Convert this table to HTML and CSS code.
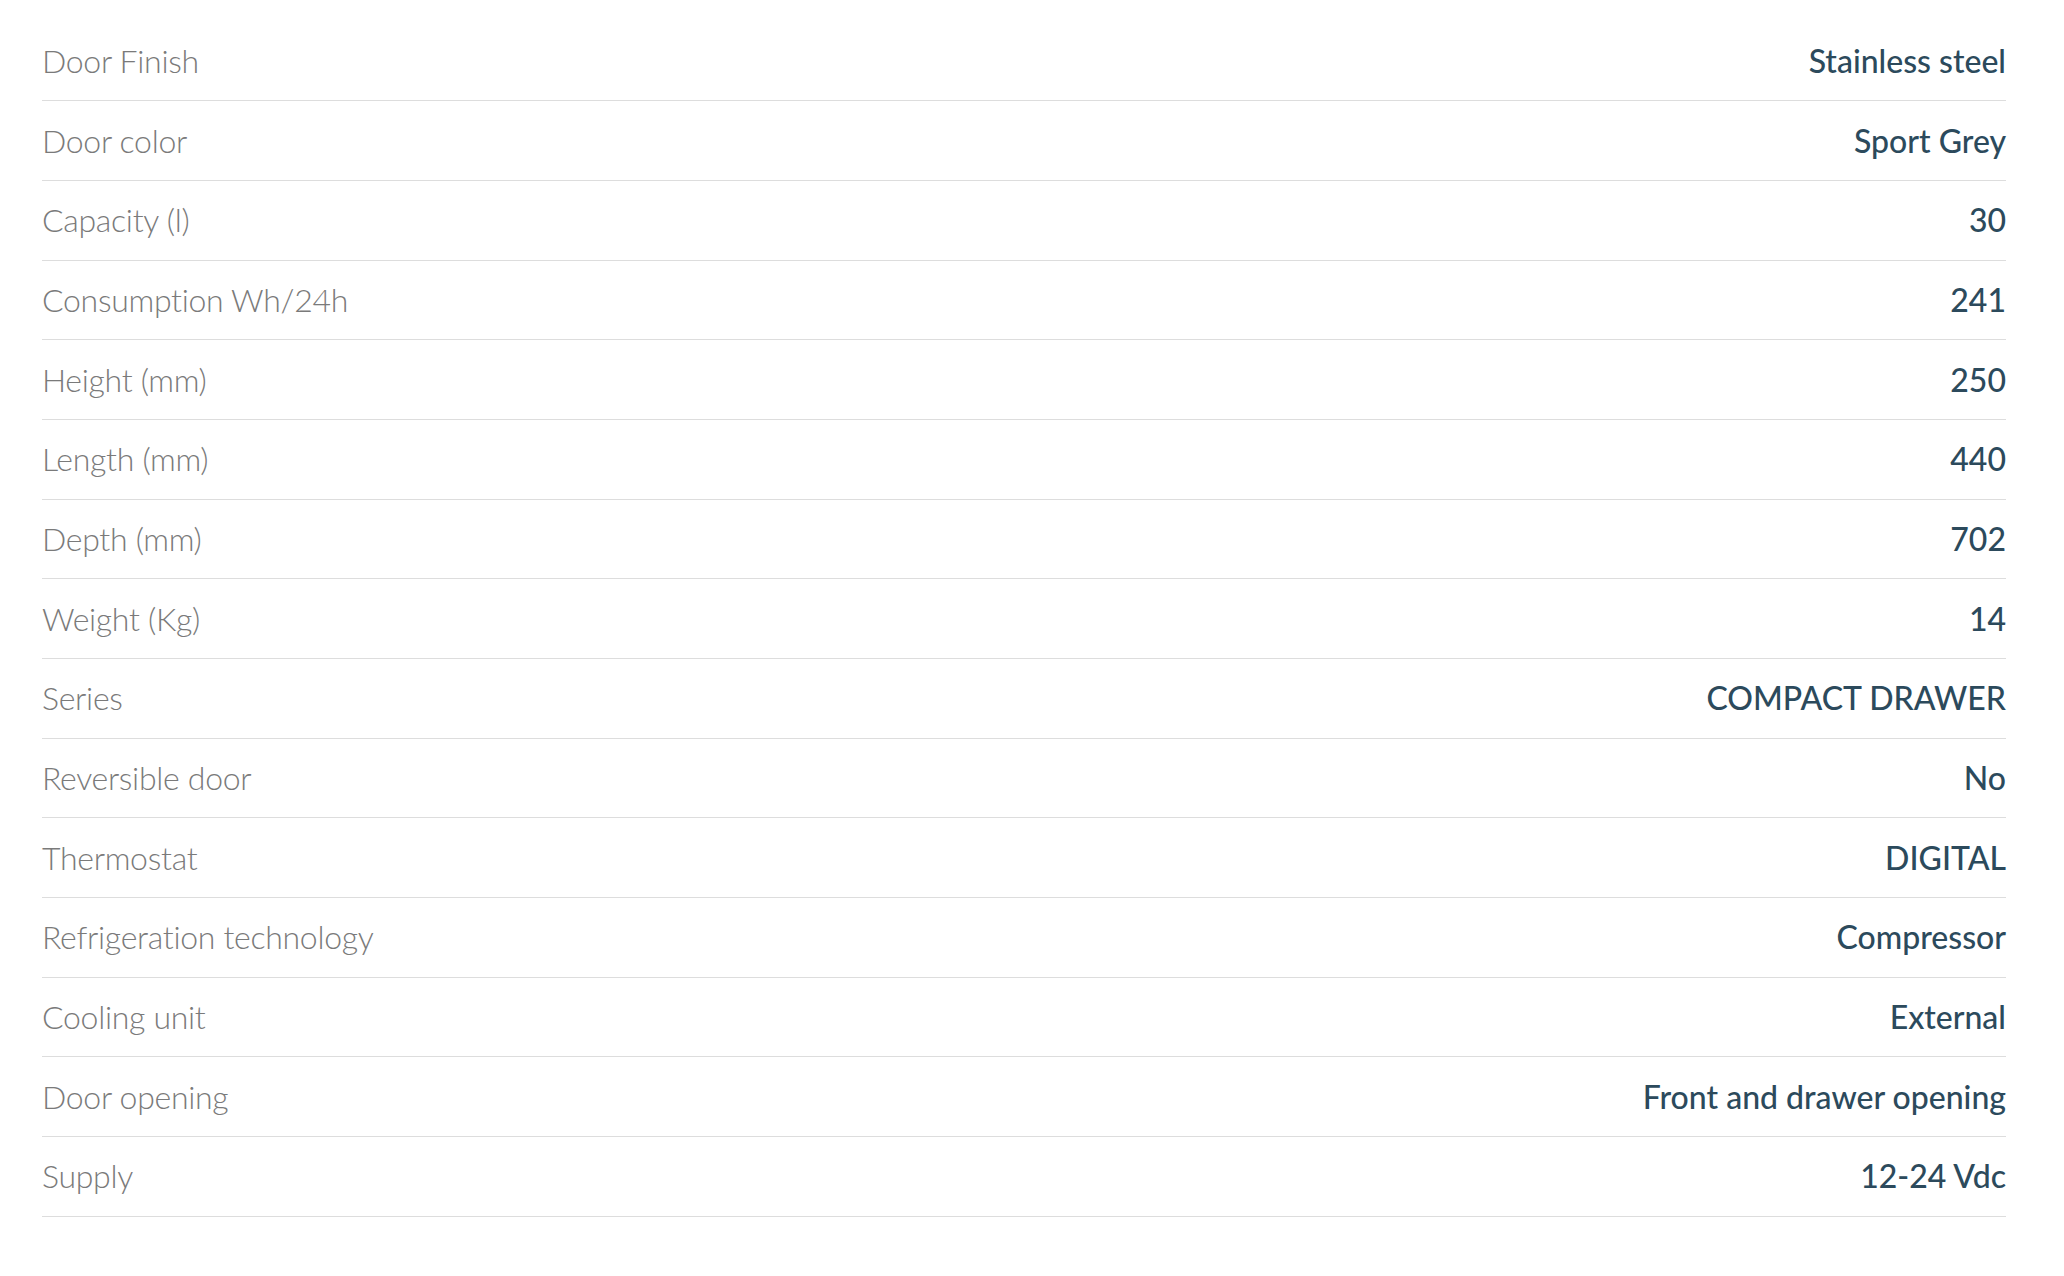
FILE: index.html
```html
<!DOCTYPE html>
<html lang="en">
<head>
<meta charset="utf-8">
<title>Specifications</title>
<link rel="stylesheet" href="styles.css">
</head>
<body>
<div class="specs">
  <div class="row"><span class="label">Door Finish</span><span class="value">Stainless steel</span></div>
  <div class="row"><span class="label">Door color</span><span class="value">Sport Grey</span></div>
  <div class="row"><span class="label">Capacity (l)</span><span class="value">30</span></div>
  <div class="row"><span class="label">Consumption Wh/24h</span><span class="value">241</span></div>
  <div class="row"><span class="label">Height (mm)</span><span class="value">250</span></div>
  <div class="row"><span class="label">Length (mm)</span><span class="value">440</span></div>
  <div class="row"><span class="label">Depth (mm)</span><span class="value">702</span></div>
  <div class="row"><span class="label">Weight (Kg)</span><span class="value">14</span></div>
  <div class="row"><span class="label">Series</span><span class="value">COMPACT DRAWER</span></div>
  <div class="row"><span class="label">Reversible door</span><span class="value">No</span></div>
  <div class="row"><span class="label">Thermostat</span><span class="value">DIGITAL</span></div>
  <div class="row"><span class="label">Refrigeration technology</span><span class="value">Compressor</span></div>
  <div class="row"><span class="label">Cooling unit</span><span class="value">External</span></div>
  <div class="row"><span class="label">Door opening</span><span class="value">Front and drawer opening</span></div>
  <div class="row"><span class="label">Supply</span><span class="value">12-24 Vdc</span></div>
</div>
</body>
</html>
```

FILE: styles.css
```css
html, body {
  margin: 0;
  padding: 0;
  background: #ffffff;
}

body {
  font-family: "Lato", "Liberation Sans", sans-serif;
}

.specs {
  width: 1964px;
  margin-left: 42px;
  padding-top: 21.5px;
}

.row {
  display: flex;
  justify-content: space-between;
  align-items: center;
  height: 78.7px;
  border-bottom: 1px solid #dddddd;
  font-size: 32px;
  line-height: 40px;
}

.label {
  color: #7a7a7a;
  font-weight: 300;
  letter-spacing: -0.3px;
}

.value {
  color: #2c4a5c;
  font-weight: 500;
  text-align: right;
}
```
